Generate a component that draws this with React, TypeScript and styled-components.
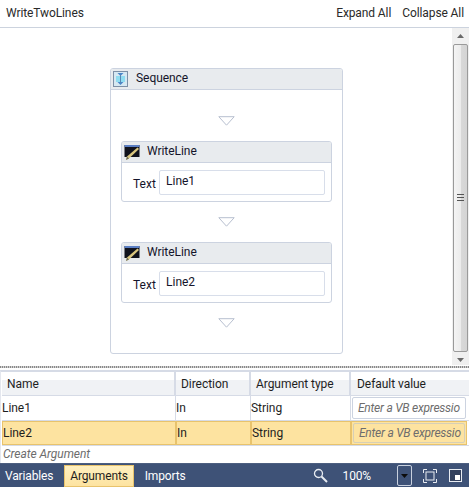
import React from "react";
import styled, { createGlobalStyle } from "styled-components";

const Global = createGlobalStyle`
  html, body { margin: 0; padding: 0; background: #fff; }
  body { font-family: Roboto, "Open Sans", sans-serif; font-size: 12px; color: #1e1e1e; }
  * { box-sizing: border-box; }
`;

const Page = styled.div`
  width: 469px;
  height: 487px;
  display: flex;
  flex-direction: column;
  overflow: hidden;
  background: #fff;
`;
const TopBar = styled.div`
  height: 28px;
  flex: none;
  display: flex;
  align-items: center;
  justify-content: space-between;
  padding: 0 5px 2px 6px;
  border-bottom: 1px solid #ccd3de;
  font-size: 12px;
  letter-spacing: -0.1px;
  color: #2a2a2a;
`;
const TopActions = styled.div`
  display: flex;
  gap: 11px;
`;
const Middle = styled.div`
  height: 337px;
  flex: none;
  display: flex;
`;
const Canvas = styled.div`
  flex: 1;
  padding: 40px 0 0 110px;
`;
const Scrollbar = styled.div`
  width: 17px;
  flex: none;
  background: #f0f0f0;
  display: flex;
  flex-direction: column;
  align-items: center;
`;
const ArrowBox = styled.div`
  height: 16px;
  flex: none;
  display: flex;
  align-items: center;
  justify-content: center;
`;
const Thumb = styled.div`
  width: 15px;
  height: 308px;
  flex: none;
  border: 1px solid #9a9a9a;
  border-radius: 2px;
  background: linear-gradient(90deg, #f4f4f4 0%, #ececec 50%, #d8d8d8 55%, #d4d4d4 100%);
  display: flex;
  align-items: center;
  justify-content: center;
`;
const Sequence = styled.div`
  width: 233px;
  height: 286px;
  border: 1px solid #ccd3e0;
  border-radius: 3px;
  background: #fff;
`;
const CardHeader = styled.div`
  height: 21px;
  display: flex;
  align-items: center;
  padding-bottom: 2px;
  background: #e8ebee;
  border-bottom: 1px solid #ccd3e0;
  border-radius: 2px 2px 0 0;
  font-size: 12px;
  letter-spacing: -0.05px;
  color: #14142a;
`;
const IconSlot = styled.span<{ $w: number }>`
  width: ${(p) => p.$w}px;
  flex: none;
  display: flex;
  align-items: center;
  padding-left: 2px;
  margin-bottom: -2px;
`;
const SequenceBody = styled.div`
  display: flex;
  flex-direction: column;
  align-items: center;
  padding: 26px 10px 0;
`;
const Drop = styled.svg`
  display: block;
  flex: none;
`;
const Activity = styled.div`
  width: 211px;
  height: 61px;
  border: 1px solid #ccd3e0;
  border-radius: 3px;
  margin: 15px 0;
`;
const ActivityBody = styled.div`
  display: flex;
  align-items: center;
  height: 39px;
  padding: 0 6px 0 11px;
  font-size: 12px;
  color: #14142a;
`;
const FieldLabel = styled.span`
  width: 26px;
  flex: none;
  padding-top: 2px;
`;
const Field = styled.div`
  flex: 1;
  height: 25px;
  border: 1px solid #d8deea;
  border-radius: 2px;
  padding: 1px 5px 0 6px;
  line-height: 18px;
  background: #fff;
`;
const Splitter = styled.div`
  height: 5px;
  flex: none;
  background-image: repeating-linear-gradient(90deg, #8a8a8a 0 1px, #d0d0d0 1px 2px);
  border-top: 1px solid #fff;
  background-clip: content-box;
  padding-top: 0;
  padding-bottom: 2px;
`;
const Grid = styled.div`
  height: 93px;
  flex: none;
  display: flex;
  flex-direction: column;
  font-size: 12px;
  letter-spacing: -0.05px;
  color: #1e1e1e;
  background: #fff;
  border-top: 2px solid #d6dbe6;
  border-left: 1px solid #e4e7ee;
  padding-left: 1px;
`;
const Row = styled.div<{ $h: number; $head?: boolean }>`
  display: grid;
  grid-template-columns: 174px 75px 100px 116px;
  height: ${(p) => p.$h}px;
  flex: none;
  border-bottom: 1px solid #d6dbe6;
  ${(p) => p.$head && `background: linear-gradient(180deg, #fff 0 35%, #f0f2f5 35% 100%);`}
`;
const HeadCell = styled.div`
  display: flex;
  align-items: center;
  padding-left: 5px;
  border-right: 2px solid #d6dbe6;
  &:last-child { border-right: 0; padding-left: 6px; }
`;
const Cell = styled.div<{ $sel?: boolean }>`
  display: flex;
  align-items: center;
  padding-left: 0;
  border-right: 1px solid ${(p) => (p.$sel ? "#fff" : "#d6dbe6")};
  ${(p) => p.$sel && `background: #fde3a0; border: 1px solid #e8c36c; `}
  &:last-child { border-right: ${(p) => (p.$sel ? "1px solid #e8c36c" : "0")}; padding: 1px; }
`;
const Expr = styled.div<{ $sel?: boolean }>`
  width: 100%;
  height: 100%;
  border: 1px solid ${(p) => (p.$sel ? "#d6cfb6" : "#ccd3e0")};
  border-radius: 2px;
  font-style: italic;
  color: #6d6d6d;
  padding-left: 5px;
  letter-spacing: -0.25px;
  display: flex;
  align-items: center;
  overflow: hidden;
  white-space: nowrap;
`;
const CreateRow = styled.div`
  height: 17px;
  flex: none;
  padding-left: 1px;
  font-style: italic;
  color: #6d6d6d;
  line-height: 16px;
`;
const Footer = styled.div`
  height: 24px;
  flex: none;
  background: #3e5277;
  display: flex;
  align-items: center;
  font-size: 12px;
  letter-spacing: -0.15px;
  color: #fff;
  border-top: 1px solid #4d5f80;
`;
const Tab = styled.div<{ $active?: boolean }>`
  height: 22px;
  display: flex;
  align-items: center;
  padding: 0 5px;
  margin-right: 6px;
  ${(p) =>
    p.$active &&
    `background: linear-gradient(180deg, #fff0c0, #fde3a0); color: #1e1e1e; border: 1px solid #e8c36c;`}
`;
const FooterRight = styled.div`
  margin-left: auto;
  display: flex;
  align-items: center;
  padding-right: 7px;
`;
const Zoom = styled.span`
  margin: 0 26px 0 15px;
`;
const DropButton = styled.div`
  width: 15px;
  height: 21px;
  border: 1px solid #c8d0de;
  border-radius: 2px;
  display: flex;
  align-items: center;
  justify-content: center;
  margin-right: 11px;
`;
const FitIcon = styled.svg`
  display: block;
  margin-right: 12px;
`;

const Tri = () => (
  <Drop width="17" height="10" viewBox="0 0 17 10">
    <path d="M0.8 0.7H16.2L8.5 9.2Z" fill="#fff" stroke="#b7bfcf" />
  </Drop>
);

const SeqIcon = () => (
  <svg width="15" height="16" viewBox="0 0 15 16">
    <rect x="0.5" y="0.5" width="14" height="15" fill="#d6e8f2" stroke="#7d8fa6" />
    <rect x="3" y="5" width="9" height="6" fill="#8fdcf0" />
    <path d="M4.5 2h6L7.5 5Z" fill="#4a86c8" />
    <path d="M4.5 11h6l-3 3Z" fill="#4a86c8" />
    <path d="M7.5 4v8" stroke="#5a86b0" />
  </svg>
);

const WriteIcon = () => (
  <svg width="16" height="18" viewBox="0 0 16 18">
    <rect x="0.5" y="2" width="15" height="12" fill="#10121c" />
    <rect x="0.5" y="2" width="15" height="2" fill="#5b7fc4" />
    <path d="M13.5 4.5L15 6L5 15.5L2 17L3 13.5Z" fill="#d9c67e" />
    <path d="M2 17L3 13.5L5 15.5Z" fill="#6a6a58" />
  </svg>
);

const Activity1 = ({ value }: { value: string }) => (
  <Activity>
    <CardHeader>
      <IconSlot $w={25}><WriteIcon /></IconSlot>
      WriteLine
    </CardHeader>
    <ActivityBody>
      <FieldLabel>Text</FieldLabel>
      <Field>{value}</Field>
    </ActivityBody>
  </Activity>
);

export default function App() {
  return (
    <Page>
      <Global />
      <TopBar>
        <span>WriteTwoLines</span>
        <TopActions>
          <span>Expand All</span>
          <span>Collapse All</span>
        </TopActions>
      </TopBar>
      <Middle>
        <Canvas>
          <Sequence>
            <CardHeader>
              <IconSlot $w={25}><SeqIcon /></IconSlot>
              Sequence
            </CardHeader>
            <SequenceBody>
              <Tri />
              <Activity1 value="Line1" />
              <Tri />
              <Activity1 value="Line2" />
              <Tri />
            </SequenceBody>
          </Sequence>
        </Canvas>
        <Scrollbar>
          <ArrowBox>
            <svg width="7" height="4" viewBox="0 0 7 4"><path d="M3.5 0L7 4H0Z" fill="#6a6a6a" /></svg>
          </ArrowBox>
          <Thumb>
            <svg width="7" height="8" viewBox="0 0 7 8">
              <path d="M0 0.5H7M0 3.5H7M0 6.5H7" stroke="#555" />
            </svg>
          </Thumb>
          <ArrowBox>
            <svg width="7" height="4" viewBox="0 0 7 4"><path d="M0 0H7L3.5 4Z" fill="#6a6a6a" /></svg>
          </ArrowBox>
        </Scrollbar>
      </Middle>
      <Splitter />
      <Grid>
        <Row $h={24} $head>
          <HeadCell>Name</HeadCell>
          <HeadCell>Direction</HeadCell>
          <HeadCell>Argument type</HeadCell>
          <HeadCell>Default value</HeadCell>
        </Row>
        <Row $h={25}>
          <Cell>Line1</Cell>
          <Cell>In</Cell>
          <Cell>String</Cell>
          <Cell><Expr>Enter a VB expressio</Expr></Cell>
        </Row>
        <Row $h={25}>
          <Cell $sel>Line2</Cell>
          <Cell $sel>In</Cell>
          <Cell $sel>String</Cell>
          <Cell $sel><Expr $sel>Enter a VB expressio</Expr></Cell>
        </Row>
        <CreateRow>Create Argument</CreateRow>
      </Grid>
      <Footer>
        <Tab>Variables</Tab>
        <Tab $active>Arguments</Tab>
        <Tab>Imports</Tab>
        <FooterRight>
          <svg width="15" height="16" viewBox="0 0 15 16">
            <circle cx="5.5" cy="5.5" r="4" fill="none" stroke="#e8ecf2" strokeWidth="1.3" />
            <path d="M8.5 8.5L14 14" stroke="#e8ecf2" strokeWidth="2" />
          </svg>
          <Zoom>100%</Zoom>
          <DropButton>
            <svg width="7" height="4" viewBox="0 0 7 4"><path d="M0 0H7L3.5 4Z" fill="#0c0c0c" /></svg>
          </DropButton>
          <FitIcon width="14" height="14" viewBox="0 0 14 14">
            <path d="M0.5 4V0.5H4M10 0.5H13.5V4M13.5 10V13.5H10M4 13.5H0.5V10" fill="none" stroke="#e8ecf2" />
            <rect x="3" y="3" width="8" height="8" fill="none" stroke="#e8ecf2" />
          </FitIcon>
          <svg width="13" height="13" viewBox="0 0 13 13">
            <rect x="0.5" y="0.5" width="12" height="12" fill="#33415e" stroke="#e8ecf2" />
            <rect x="6" y="6" width="5" height="5" fill="#fff" />
          </svg>
        </FooterRight>
      </Footer>
    </Page>
  );
}
